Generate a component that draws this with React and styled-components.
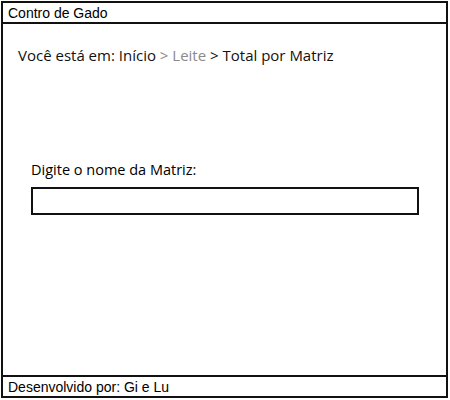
import React from 'react';
import styled, { createGlobalStyle } from 'styled-components';

const GlobalStyle = createGlobalStyle`
  body {
    margin: 0;
    background: #fff;
    font-family: "Liberation Sans", Arial, sans-serif;
    color: #000;
  }
`;

const StyledFrame = styled.div`
  box-sizing: border-box;
  width: 447px;
  height: 397px;
  margin: 1px;
  border: 2px solid #111;
  display: flex;
  flex-direction: column;
`;

const StyledBar = styled.div`
  box-sizing: border-box;
  height: 21px;
  padding-left: 5px;
  display: flex;
  align-items: center;
  font-size: 14px;
  border-${(p) => p.side}: 2px solid #111;
`;

const StyledMain = styled.main`
  flex: 1;
  padding: 21px 27px 0 15px;
  font-family: "Open Sans", sans-serif;
  font-size: 15px;
`;

const StyledCrumbs = styled.p`
  margin: 0;
`;

const StyledCrumb = styled.span`
  color: ${(p) => (p.muted ? '#8a8a8a' : '#111')};
`;

const StyledField = styled.div`
  margin-top: 95px;
  padding-left: 13px;
  display: flex;
  flex-direction: column;
  gap: 8px;
`;

const StyledLabel = styled.label`
  font-size: 14.5px;
`;

const StyledInput = styled.input`
  box-sizing: border-box;
  width: 388px;
  height: 28px;
  margin: 0;
  border: 2px solid #111;
  border-radius: 0;
  outline: none;
  padding: 0 6px;
  font: inherit;
`;

const App = () => (
  <>
    <GlobalStyle />
    <StyledFrame>
      <StyledBar side="bottom">Contro de Gado</StyledBar>
      <StyledMain>
        <StyledCrumbs>
          <StyledCrumb>Você está em: Início </StyledCrumb>
          <StyledCrumb muted>&gt; Leite </StyledCrumb>
          <StyledCrumb>&gt; Total por Matriz</StyledCrumb>
        </StyledCrumbs>
        <StyledField>
          <StyledLabel htmlFor="matriz">Digite o nome da Matriz:</StyledLabel>
          <StyledInput id="matriz" type="text" />
        </StyledField>
      </StyledMain>
      <StyledBar side="top">Desenvolvido por: Gi e Lu</StyledBar>
    </StyledFrame>
  </>
);

export default App;
